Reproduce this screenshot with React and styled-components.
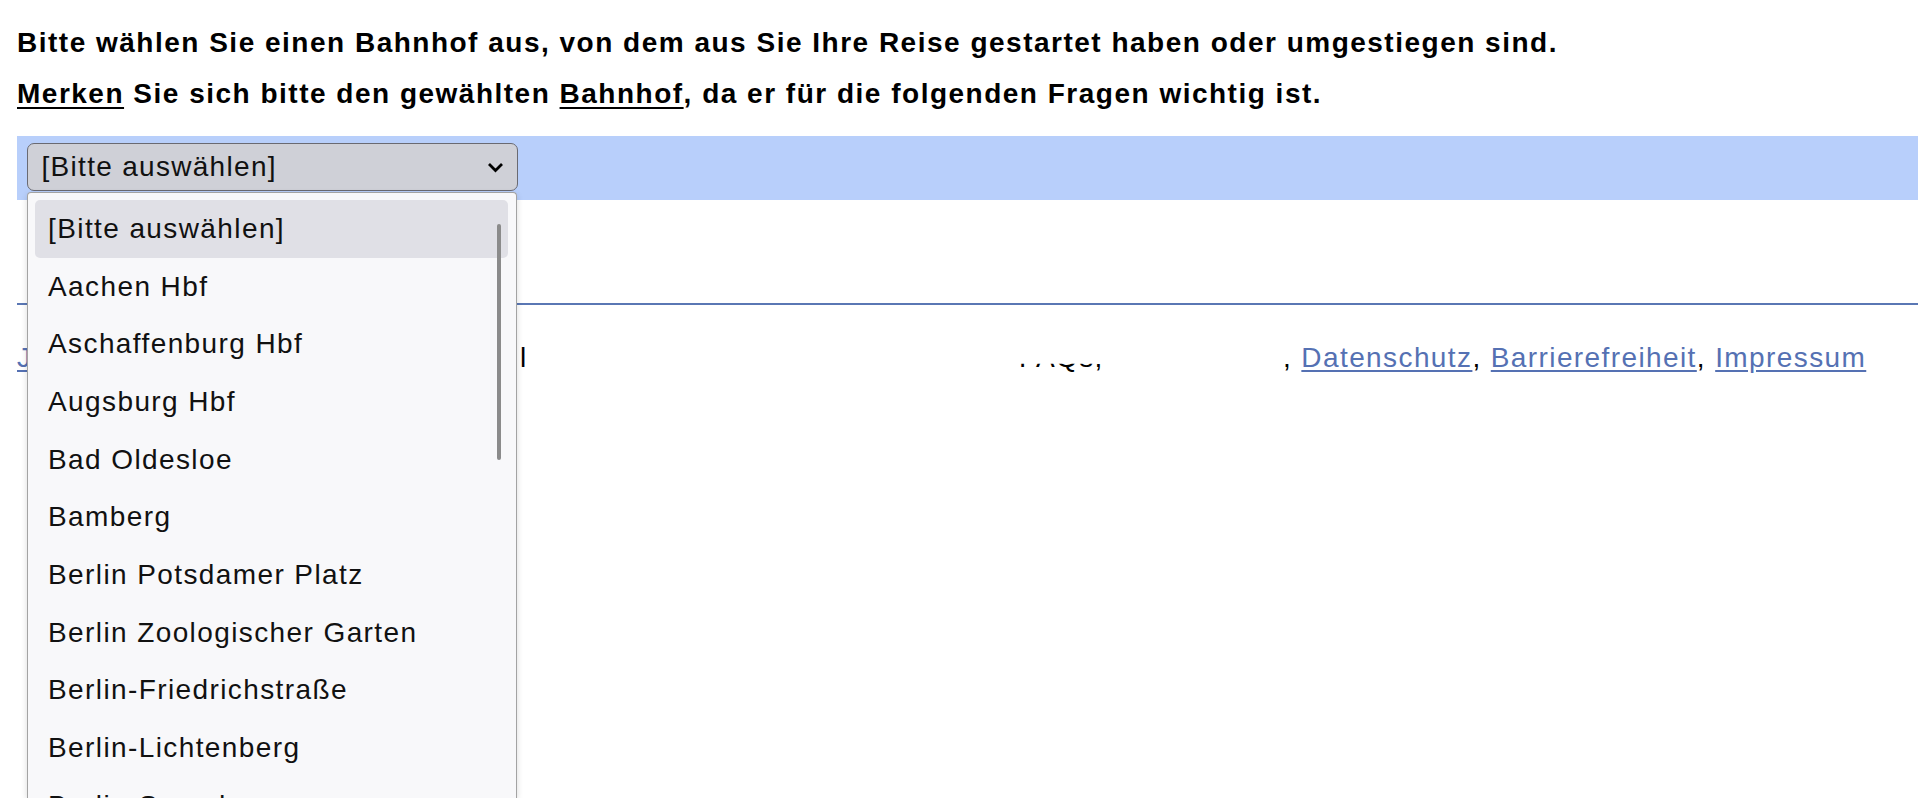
import React from 'react';
import styled, { createGlobalStyle } from 'styled-components';

const GlobalStyle = createGlobalStyle`
  html, body {
    margin: 0;
    padding: 0;
    background: #fff;
  }
  body {
    font-family: "Liberation Sans", Arial, sans-serif;
    color: #000;
  }
`;

const Page = styled.div`
  min-height: 100vh;
  box-sizing: border-box;
  padding: 17px 0 0 17px;
  overflow: hidden;
`;

const Intro = styled.div`
  font-size: 28px;
  font-weight: 700;
  line-height: 51px;
  letter-spacing: 1.5px;
  white-space: nowrap;
`;

const Marked = styled.span`
  text-decoration: underline;
  text-decoration-thickness: 2px;
  text-underline-offset: 4px;
`;

const ChoiceBar = styled.div`
  margin-top: 17px;
  height: 64px;
  box-sizing: border-box;
  padding: 7px 10px;
  background: #b8cffb;
`;

const SelectWrap = styled.div`
  position: relative;
  width: 491px;
`;

const SelectBox = styled.div`
  height: 48px;
  box-sizing: border-box;
  display: flex;
  align-items: center;
  justify-content: space-between;
  padding: 0 13.5px;
  border: 1.5px solid #6a6a72;
  border-radius: 7px;
  background: #cfd0d7;
  color: #111;
  font-size: 28px;
  letter-spacing: 1.3px;
`;

const Popup = styled.div`
  position: absolute;
  top: 49px;
  left: 0;
  z-index: 10;
  width: 490px;
  height: 606px;
  box-sizing: border-box;
  padding: 7px 8px 0 7px;
  border: 1px solid #a3a3a3;
  border-bottom: 0;
  border-radius: 4px 4px 0 0;
  background: #f8f8fa;
  box-shadow: 0 2px 6px rgba(0, 0, 0, 0.15);
  overflow: hidden;
`;

const Option = styled.div`
  height: 57.7px;
  display: flex;
  align-items: center;
  padding-left: 13px;
  border-radius: 5px;
  background: ${p => (p.$active ? '#e0e0e6' : 'transparent')};
  color: #111;
  font-size: 28px;
  letter-spacing: 1.4px;
  white-space: nowrap;
`;

const Thumb = styled.div`
  position: absolute;
  top: 31px;
  right: 15px;
  width: 4px;
  height: 236px;
  border-radius: 2px;
  background: #8b8b8b;
`;

const Rule = styled.hr`
  margin: 103px 0 0;
  height: 2px;
  border: 0;
  background: #5a77b4;
`;

const Footer = styled.div`
  margin-top: 37px;
  font-size: 28px;
  line-height: 32px;
  letter-spacing: 1.4px;
  white-space: nowrap;
`;

const FooterLink = styled.a`
  color: #5571b3;
  text-decoration: underline;
  text-underline-offset: 3px;
`;

const Segment = styled.span`
  display: inline-block;
  width: ${p => p.$w}px;
  overflow: hidden;
  vertical-align: top;
`;

const Fragment = styled.span`
  display: inline-block;
  clip-path: inset(68% 0 0 0);
`;

const Chevron = () => (
  <svg width="17" height="11" viewBox="0 0 17 11">
    <polyline points="2,2 8.5,8.5 15,2" fill="none" stroke="#000" strokeWidth="2.8" />
  </svg>
);

const stations = [
  '[Bitte auswählen]',
  'Aachen Hbf',
  'Aschaffenburg Hbf',
  'Augsburg Hbf',
  'Bad Oldesloe',
  'Bamberg',
  'Berlin Potsdamer Platz',
  'Berlin Zoologischer Garten',
  'Berlin-Friedrichstraße',
  'Berlin-Lichtenberg',
  'Berlin-Spandau',
];

const App = () => {
  return (
    <>
      <GlobalStyle />
      <Page>
        <Intro>
          <div>Bitte wählen Sie einen Bahnhof aus, von dem aus Sie Ihre Reise gestartet haben oder umgestiegen sind.</div>
          <div>
            <Marked>Merken</Marked> Sie sich bitte den gewählten <Marked>Bahnhof</Marked>, da er für die folgenden Fragen wichtig ist.
          </div>
        </Intro>

        <ChoiceBar>
          <SelectWrap>
            <SelectBox>
              <span>[Bitte auswählen]</span>
              <Chevron />
            </SelectBox>
            <Popup>
              {stations.map((name, i) => (
                <Option key={name} $active={i === 0}>{name}</Option>
              ))}
              <Thumb />
            </Popup>
          </SelectWrap>
        </ChoiceBar>

        <Rule />

        <Footer>
          <Segment $w={503}>
            <FooterLink href="#">Jobs</FooterLink>
          </Segment>
          <Segment $w={499}>l</Segment>
          <Segment $w={264}>
            <Fragment>FAQs,</Fragment>
          </Segment>
          , <FooterLink href="#">Datenschutz</FooterLink>, <FooterLink href="#">Barrierefreiheit</FooterLink>,{' '}
          <FooterLink href="#">Impressum</FooterLink>
        </Footer>
      </Page>
    </>
  );
};

export default App;
